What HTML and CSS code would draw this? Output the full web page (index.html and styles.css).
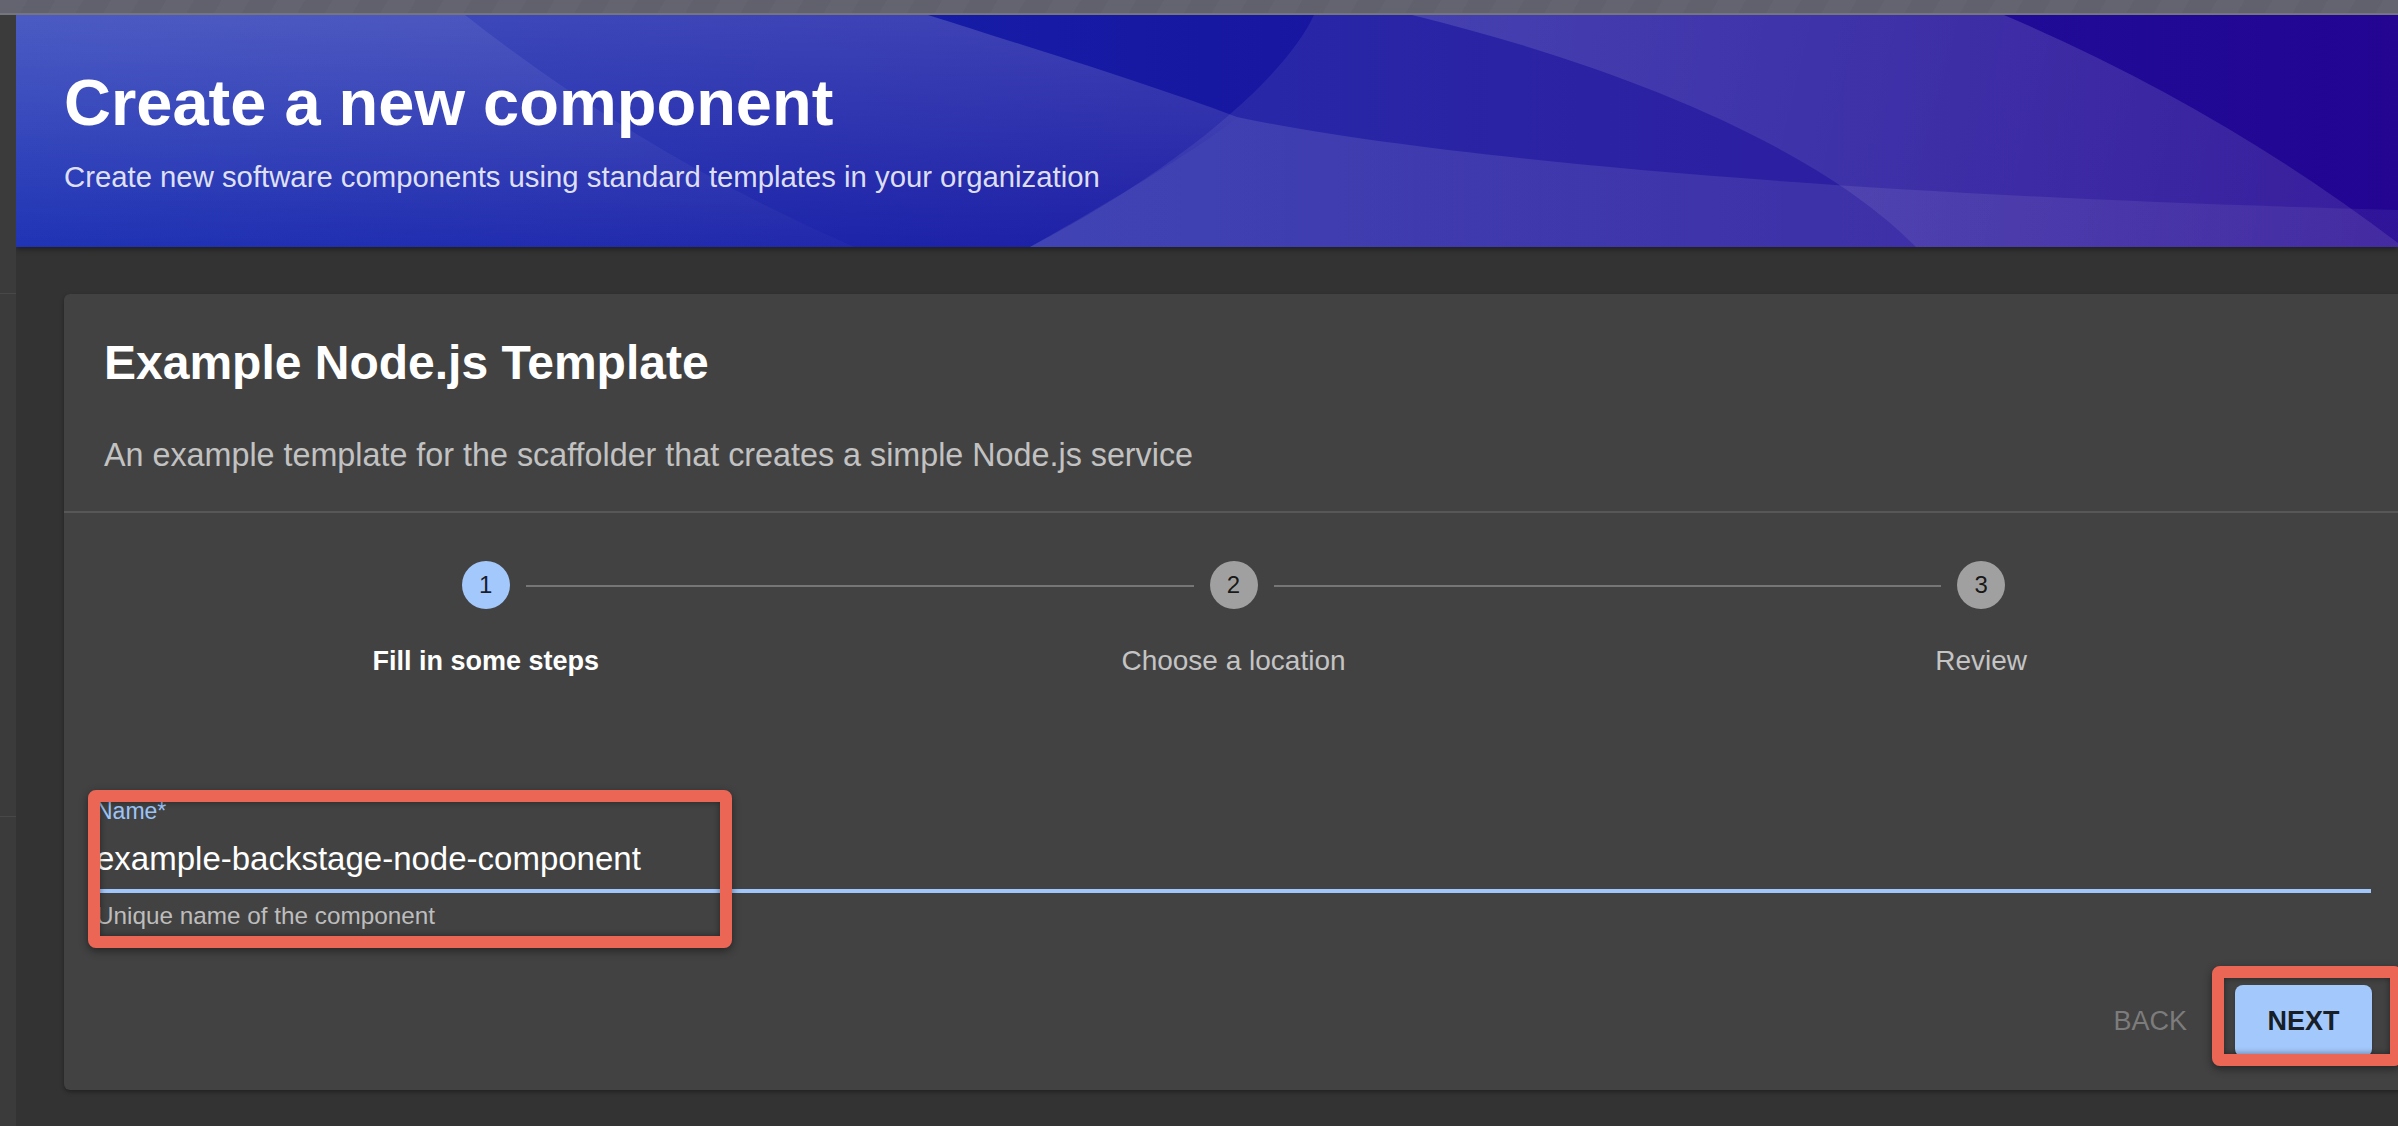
FILE: index.html
```html
<!DOCTYPE html>
<html lang="en">
<head>
<meta charset="utf-8">
<title>Create a new component</title>
<link rel="stylesheet" href="styles.css">
</head>
<body>
<div class="topbar"></div>
<div class="app">
  <aside class="rail">
    <div class="rail-seg rail-top"></div>
    <div class="rail-seg rail-mid"></div>
    <div class="rail-seg rail-bottom"></div>
  </aside>
  <main class="main">
    <header class="hero">
      <svg class="hero-bg" viewBox="0 0 2382 232" preserveAspectRatio="none" aria-hidden="true">
        <defs>
          <linearGradient id="gBase" gradientUnits="userSpaceOnUse" x1="0" y1="0" x2="2382" y2="0">
            <stop offset="0" stop-color="#1429b1"/>
            <stop offset="0.5" stop-color="#1718a2"/>
            <stop offset="1" stop-color="#230592"/>
          </linearGradient>
          <linearGradient id="gBL" gradientUnits="userSpaceOnUse" x1="0" y1="0" x2="0" y2="232">
            <stop offset="0" stop-color="#fff" stop-opacity="0.17"/>
            <stop offset="1" stop-color="#fff" stop-opacity="0.03"/>
          </linearGradient>
          <linearGradient id="gA" gradientUnits="userSpaceOnUse" x1="0" y1="0" x2="0" y2="232">
            <stop offset="0" stop-color="#fff" stop-opacity="0.08"/>
            <stop offset="1" stop-color="#fff" stop-opacity="0.02"/>
          </linearGradient>
          <linearGradient id="gQP" gradientUnits="userSpaceOnUse" x1="1014" y1="0" x2="2382" y2="0">
            <stop offset="0" stop-color="#fff" stop-opacity="0.12"/>
            <stop offset="1" stop-color="#fff" stop-opacity="0.06"/>
          </linearGradient>
          <linearGradient id="gR" gradientUnits="userSpaceOnUse" x1="1396" y1="0" x2="2382" y2="232">
            <stop offset="0" stop-color="#fff" stop-opacity="0.13"/>
            <stop offset="1" stop-color="#fff" stop-opacity="0.03"/>
          </linearGradient>
        </defs>
        <rect x="0" y="0" width="2382" height="232" fill="url(#gBase)"/>
        <path d="M0,0 H912 C1000,28 1130,68 1221,102 C1190,130 1080,195 1014,232 H0 Z" fill="url(#gBL)"/>
        <path d="M0,0 H449 Q627,140 838,232 H0 Z" fill="url(#gA)"/>
        <path d="M1298,0 C1270,60 1170,150 1014,232 H2382 V228 Q2200,90 1988,0 Z" fill="#fff" fill-opacity="0.07"/>
        <path d="M1221,102 C1400,140 1800,180 2382,195 V232 H1014 C1080,195 1190,130 1221,102 Z" fill="url(#gQP)"/>
        <path d="M1396,0 C1600,50 1800,130 1900,232 H2382 V228 Q2200,90 1988,0 Z" fill="url(#gR)"/>
      </svg>
      <div class="hero-text">
        <h1 class="hero-title">Create a new component</h1>
        <p class="hero-sub">Create new software components using standard templates in your organization</p>
      </div>
    </header>

    <div class="content">
      <section class="card">
        <div class="card-head">
          <h2 class="card-title">Example Node.js Template</h2>
          <p class="card-desc">An example template for the scaffolder that creates a simple Node.js service</p>
        </div>
        <div class="divider"></div>

        <div class="stepper">
          <div class="step-icons">
            <span class="step-spacer"></span>
            <span class="step-dot step-dot-active">1</span>
            <span class="step-conn"></span>
            <span class="step-dot">2</span>
            <span class="step-conn"></span>
            <span class="step-dot">3</span>
            <span class="step-spacer"></span>
          </div>
          <div class="step-labels">
            <span class="step-label step-label-active">Fill in some steps</span>
            <span class="step-label">Choose a location</span>
            <span class="step-label">Review</span>
          </div>
        </div>

        <div class="form">
          <div class="field-label">Name*</div>
          <div class="field-input">example-backstage-node-component</div>
          <div class="field-help">Unique name of the component</div>
        </div>

        <div class="actions">
          <button class="btn btn-back" type="button">BACK</button>
          <button class="btn btn-next" type="button">NEXT</button>
        </div>

        <div class="mark mark-field"></div>
        <div class="mark mark-next"></div>
      </section>
    </div>
  </main>
</div>
</body>
</html>
```

FILE: styles.css
```css
* {
  box-sizing: border-box;
}

html, body {
  margin: 0;
  padding: 0;
  width: 2398px;
  height: 1126px;
  overflow: hidden;
  background: #333333;
  font-family: "Liberation Sans", Arial, Helvetica, sans-serif;
}

.topbar {
  height: 15px;
  background: repeating-linear-gradient(120deg, #63646f 0 24px, #60616c 24px 48px);
  border-bottom: 2px solid #74757e;
}

.app {
  display: flex;
  height: 1111px;
}

.rail {
  width: 16px;
  flex: 0 0 16px;
  display: flex;
  flex-direction: column;
  background: #3b3b3b;
}

.rail-seg {
  border-bottom: 1px solid #484848;
}

.rail-top {
  height: 279px;
}

.rail-mid {
  height: 523px;
}

.rail-bottom {
  flex: 1;
  border-bottom: none;
}

.main {
  flex: 1;
  min-width: 0;
  display: flex;
  flex-direction: column;
  overflow: hidden;
}

/* Header */
.hero {
  position: relative;
  height: 232px;
  flex: 0 0 232px;
  padding: 50px 48px 0;
  box-shadow: 0 2px 6px rgba(0, 0, 0, 0.45);
  z-index: 1;
}

.hero-bg {
  position: absolute;
  left: 0;
  top: 0;
  width: 100%;
  height: 100%;
  display: block;
}

.hero-text {
  position: relative;
}

.hero-title {
  margin: 0;
  font-size: 65px;
  line-height: 76px;
  font-weight: 700;
  color: #ffffff;
}

.hero-sub {
  margin: 18px 0 0;
  font-size: 29.3px;
  line-height: 36px;
  color: rgba(255, 255, 255, 0.86);
}

/* Content */
.content {
  flex: 1;
  padding: 47px 0 0 48px;
  overflow: hidden;
}

.card {
  position: relative;
  width: 2339px;
  background: #424242;
  border-radius: 6px;
  box-shadow: 0 2px 4px rgba(0, 0, 0, 0.35);
  padding-bottom: 33px;
}

.card-head {
  padding: 40px 40px 36px;
}

.card-title {
  margin: 0;
  font-size: 48px;
  line-height: 58px;
  font-weight: 700;
  color: #ffffff;
}

.card-desc {
  margin: 43px 0 0;
  font-size: 32.3px;
  line-height: 40px;
  color: #c2c2c2;
}

.divider {
  height: 2px;
  background: #575757;
}

/* Stepper */
.stepper {
  padding: 48px 48px 0;
}

.step-icons {
  display: flex;
  align-items: center;
  height: 48px;
}

.step-spacer {
  flex: 0 0 349.75px;
}

.step-dot {
  flex: 0 0 48px;
  width: 48px;
  height: 48px;
  border-radius: 50%;
  background: #a0a0a0;
  color: rgba(0, 0, 0, 0.87);
  font-size: 24px;
  line-height: 48px;
  text-align: center;
}

.step-dot-active {
  background: #a3c8fb;
}

.step-conn {
  flex: 1;
  height: 2px;
  margin: 2px 16px 0;
  background: #767676;
}

.step-labels {
  display: grid;
  grid-template-columns: repeat(3, 1fr);
  margin-top: 35px;
}

.step-label {
  text-align: center;
  font-size: 28px;
  line-height: 34px;
  color: #c4c4c4;
}

.step-label-active {
  color: #ffffff;
  font-weight: 700;
  font-size: 27px;
}

/* Form */
.form {
  padding: 119px 32px 0;
}

.field-label {
  font-size: 23px;
  line-height: 28px;
  color: #9cc4f8;
}

.field-input {
  margin-top: 14px;
  padding-bottom: 10px;
  font-size: 33px;
  line-height: 40px;
  color: #ffffff;
  border-bottom: 4px solid #a0c6fb;
}

.field-help {
  margin-top: 8px;
  font-size: 24.3px;
  line-height: 30px;
  color: #bdbdbd;
}

/* Actions */
.actions {
  display: flex;
  justify-content: flex-end;
  align-items: center;
  gap: 16px;
  margin-top: 54px;
  padding-right: 31px;
}

.btn {
  height: 72px;
  border: none;
  border-radius: 8px;
  font-family: "Liberation Sans", Arial, Helvetica, sans-serif;
  font-size: 27px;
  line-height: 72px;
  padding: 0 32px;
  background: transparent;
}

.btn-back {
  color: #7c7c7c;
}

.btn-next {
  width: 137px;
  padding: 0;
  background: #a3c8fb;
  color: rgba(0, 0, 0, 0.87);
  font-weight: 700;
  box-shadow: 0 2px 3px rgba(0, 0, 0, 0.3);
}

/* Annotation marks */
.mark {
  position: absolute;
  border: 12px solid #eb6655;
  border-radius: 8px;
  box-shadow: 0 3px 8px rgba(0, 0, 0, 0.45), inset 0 0 6px rgba(0, 0, 0, 0.45);
  pointer-events: none;
}

.mark-field {
  left: 24px;
  top: 496px;
  width: 644px;
  height: 158px;
}

.mark-next {
  left: 2148px;
  top: 672px;
  width: 190px;
  height: 100px;
}
```
